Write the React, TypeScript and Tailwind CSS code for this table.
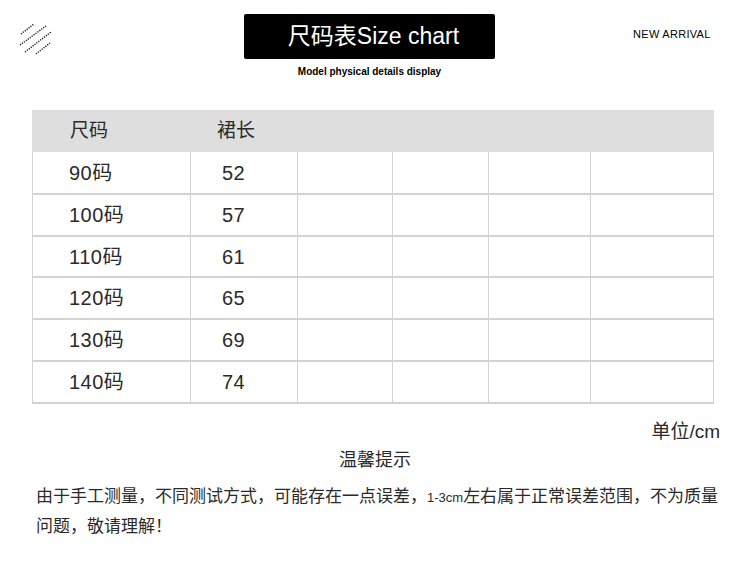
const font = { fontFamily: '"Liberation Sans", "Noto Sans CJK SC", sans-serif' };

const rows = [
  { size: '90码', len: '52', h: 'h-[41px]' },
  { size: '100码', len: '57', h: 'h-[42px]' },
  { size: '110码', len: '61', h: 'h-[41px]' },
  { size: '120码', len: '65', h: 'h-[42px]' },
  { size: '130码', len: '69', h: 'h-[42px]' },
  { size: '140码', len: '74', h: 'h-[42px]' },
];

const Hatch = () => (
  <svg width="34" height="34" viewBox="0 0 34 34" className="ml-[18px] mt-[10px] shrink-0">
    <g stroke="#111" strokeWidth="1.4" strokeDasharray="1.2 1.2" fill="none">
      <line x1="3" y1="10" x2="16" y2="0" />
      <line x1="2" y1="21" x2="28" y2="2" />
      <line x1="7" y1="28" x2="33" y2="8" />
      <line x1="18" y1="30" x2="32" y2="19" />
    </g>
  </svg>
);

const App = () => {
  return (
    <div className="w-[750px] h-[568px] bg-white text-[#2a2a2a]" style={font}>
      <div className="flex items-start pt-[14px]">
        <Hatch />
        <div className="ml-[192px] flex flex-col items-center">
          <div className="flex h-[45px] w-[251px] items-center justify-center rounded-[2px] bg-black pl-[8px] text-[23px] text-white">
            尺码表Size chart
          </div>
          <p className="mt-[8px] text-[10px] font-bold leading-none text-black">Model physical details display</p>
        </div>
        <p className="ml-[138px] mt-[15px] text-[11px] leading-none tracking-[0.3px] text-black">NEW ARRIVAL</p>
      </div>

      <div className="ml-[32px] mt-[33px] w-[682px]">
        <div className="flex h-[42px] items-center bg-[#dedede] text-[19px]">
          <div className="w-[158px] pl-[38px]">尺码</div>
          <div className="pl-[27px]">裙长</div>
        </div>
        <div className="border-x border-b-2 border-[#d3d3d3]">
          {rows.map((r, i) => (
            <div
              key={r.size}
              className={`flex ${r.h} ${i > 0 ? 'border-t-2 border-[#d3d3d3]' : ''}`}
            >
              <div className="flex w-[157px] items-center pl-[36px] text-[20px] tracking-[0.5px]">{r.size}</div>
              <div className="flex w-[107px] items-center border-l border-[#d3d3d3] pl-[31px] text-[20px] tracking-[0.5px]">{r.len}</div>
              <div className="w-[95px] border-l border-[#d3d3d3]" />
              <div className="w-[96px] border-l border-[#d3d3d3]" />
              <div className="w-[102px] border-l border-[#d3d3d3]" />
              <div className="flex-1 border-l border-[#d3d3d3]" />
            </div>
          ))}
        </div>
      </div>

      <p className="mt-[18px] pr-[30px] text-right text-[19px] leading-none">单位/cm</p>
      <p className="mt-[10px] text-center text-[18px] leading-none">温馨提示</p>
      <p className="mt-[13px] pl-[36px] text-[17px] leading-[29px]">
        由于手工测量，不同测试方式，可能存在一点误差，<span className="text-[13px]">1-3cm</span>左右属于正常误差范围，不为质量
        <br />
        问题，敬请理解！
      </p>
    </div>
  );
};

export default App;
